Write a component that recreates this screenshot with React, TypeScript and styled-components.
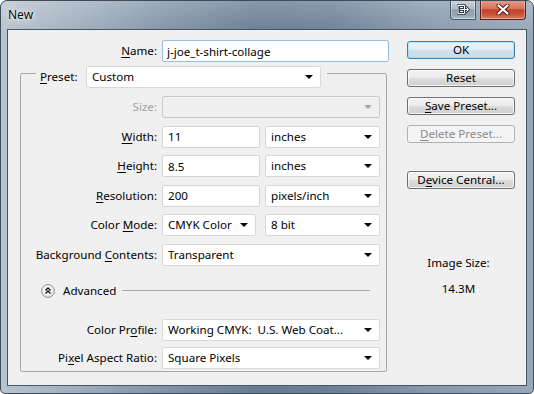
import React from 'react';
import styled, { createGlobalStyle } from 'styled-components';

const FONT = `"Noto Sans", "Open Sans", sans-serif`;
const FS = '11.6px';

const GlobalStyle = createGlobalStyle`
  html, body { margin: 0; padding: 0; background: #ffffff; }
  body { font-family: ${FONT}; font-size: ${FS}; color: #000; }
  * { box-sizing: border-box; }
`;

const Window = styled.div`
  width: 534px;
  height: 394px;
  display: flex;
  flex-direction: column;
  padding: 0 6px 7px 6px;
  border: 1px solid #3e4b5a;
  border-radius: 7px 7px 5px 5px;
  background:
    linear-gradient(180deg, rgba(255,255,255,0.22) 0px, rgba(255,255,255,0.04) 28px, rgba(255,255,255,0) 29px),
    linear-gradient(90deg, #b9c4cf 0%, #a0aebd 14%, #7f91a6 32%, #687c93 48%, #6b7f96 62%, #8798ac 80%, #97a7b8 100%);
  overflow: hidden;
`;

const TitleBar = styled.div`
  height: 28px;
  flex: none;
  display: flex;
  align-items: flex-start;
`;

const Title = styled.div`
  margin: 6px 0 0 1px;
  font-size: 12px;
  line-height: 16px;
  color: #0b0b0b;
  text-shadow: 0 0 6px rgba(255,255,255,0.9), 0 0 3px rgba(255,255,255,0.8);
`;

const CaptionButtons = styled.div`
  margin: -1px 1px 0 auto;
  display: flex;
  gap: 4px;
`;

const CaptionButton = styled.div<{ $variant: 'help' | 'close' }>`
  height: 20px;
  width: ${p => (p.$variant === 'close' ? 46 : 26)}px;
  display: flex;
  align-items: center;
  justify-content: center;
  border: 1px solid ${p => (p.$variant === 'close' ? '#5b1f18' : '#4a5868')};
  border-top: none;
  border-radius: ${p => (p.$variant === 'close' ? '0 0 4px 0' : '0 0 0 4px')};
  background: ${p =>
    p.$variant === 'close'
      ? 'linear-gradient(180deg, #e3a18f 0%, #d6735d 45%, #c24229 52%, #c9553a 78%, #df8464 100%)'
      : 'linear-gradient(180deg, #cfd7e0 0%, #b0bcc9 45%, #8f9daf 52%, #98a6b7 82%, #b4c0cd 100%)'};
  box-shadow: inset 0 0 0 1px rgba(255,255,255,0.35);
`;

const Client = styled.div`
  flex: 1;
  display: flex;
  background: #f0f0f0;
  border: 1px solid #45566a;
`;

const LeftPane = styled.div`
  width: 379px;
  flex: none;
  padding: 10px 0 0 12px;
  display: flex;
  flex-direction: column;
`;

const Row = styled.div<{ $indent?: number }>`
  display: grid;
  grid-template-columns: 136px auto;
  column-gap: 5px;
  align-items: center;
  padding-left: ${p => p.$indent ?? 0}px;
`;

const Label = styled.span<{ $disabled?: boolean }>`
  text-align: right;
  white-space: nowrap;
  line-height: 16px;
  color: ${p => (p.$disabled ? '#a3a3a3' : '#000')};
`;

const Key = styled.span`
  text-decoration: underline;
  text-underline-offset: 2px;
`;

const Controls = styled.div`
  width: 218px;
  display: flex;
  justify-content: space-between;
`;

const TextBox = styled.input<{ $w: number; $focused?: boolean }>`
  width: ${p => p.$w}px;
  height: 22px;
  margin: 0;
  padding: 0 0 0 ${p => (p.$focused ? 4 : 5)}px;
  font: ${FS} ${FONT};
  color: #000;
  background: #fff;
  border: 1px solid ${p => (p.$focused ? '#98bcdc' : '#d4d4d4')};
  border-radius: 2px;
  outline: none;
`;

const Combo = styled.div<{ $w: number; $disabled?: boolean }>`
  position: relative;
  width: ${p => p.$w}px;
  height: 22px;
  padding-left: 5px;
  line-height: 20px;
  white-space: pre;
  background: ${p => (p.$disabled ? '#f0f0f0' : '#fff')};
  border: 1px solid ${p => (p.$disabled ? '#c9c9c9' : '#d8d8d8')};
  border-radius: 2px;
`;

const Arrow = styled.span<{ $disabled?: boolean }>`
  position: absolute;
  right: 7px;
  top: 8px;
  width: 0;
  height: 0;
  border-left: 4px solid transparent;
  border-right: 4px solid transparent;
  border-top: 4px solid ${p => (p.$disabled ? '#a8a8a8' : '#000')};
`;

const GroupBox = styled.div`
  margin-top: 11px;
  width: 367px;
  border: 1px solid #a9a9a9;
  border-radius: 2px;
  padding: 0 6px 2px 0;
  display: flex;
  flex-direction: column;
`;

const GroupHeader = styled.div`
  margin: -8px 0 0 15px;
  align-self: flex-start;
  display: flex;
  align-items: center;
  padding: 0 6px 0 4px;
  background: #f0f0f0;
`;

const HeaderLabel = styled.span`
  width: 46px;
  line-height: 16px;
  white-space: nowrap;
`;

const Rows = styled.div<{ $gap: number; $top: number }>`
  margin-top: ${p => p.$top}px;
  display: flex;
  flex-direction: column;
  gap: ${p => p.$gap}px;
`;

const AdvancedRow = styled.div`
  margin: 17px 10px 0 20px;
  height: 16px;
  display: flex;
  align-items: center;
`;

const AdvancedText = styled.span`
  margin-left: 8px;
  line-height: 16px;
  white-space: nowrap;
`;

const Rule = styled.div`
  flex: 1;
  margin-left: 6px;
  height: 1px;
  background: #a9a9a9;
`;

const RightPane = styled.div`
  flex: 1;
  padding: 11px 0 0 20px;
  display: flex;
  flex-direction: column;
  align-items: flex-start;
`;

const Button = styled.button<{ $kind?: 'default' | 'disabled'; $top?: number }>`
  width: 108px;
  height: 18px;
  margin: ${p => p.$top ?? 10}px 0 0 0;
  padding: 0;
  font: ${FS} ${FONT};
  line-height: 16px;
  color: ${p => (p.$kind === 'disabled' ? '#8a8a8a' : '#000')};
  border: 1px solid ${p => (p.$kind === 'default' ? '#3c7fb1' : p.$kind === 'disabled' ? '#adb2b5' : '#707070')};
  border-radius: 3px;
  background: ${p =>
    p.$kind === 'default'
      ? 'linear-gradient(180deg, #edf4f9 0%, #e0ebf4 50%, #d0e1ee 51%, #c6dbeb 100%)'
      : p.$kind === 'disabled'
      ? '#f4f4f4'
      : 'linear-gradient(180deg, #f2f2f2 0%, #ebebeb 50%, #dddddd 51%, #cfcfcf 100%)'};
  box-shadow: inset 0 0 0 1px ${p => (p.$kind === 'default' ? 'rgba(140,220,250,0.55)' : p.$kind === 'disabled' ? '#f4f4f4' : 'rgba(255,255,255,0.75)')};
`;

const InfoBlock = styled.div`
  width: 108px;
  margin-top: 66px;
  padding-right: 5px;
  text-align: center;
  display: flex;
  flex-direction: column;
  gap: 10px;
  line-height: 16px;
`;

const HelpGlyph = () => (
  <svg width="13" height="11" viewBox="0 0 13 11">
    <g fill="none" strokeLinecap="square">
      <path d="M1.5 1.5h6v8h-6z M3.5 3.5h2 M3.5 5.5h4 M3.5 7.5h2 M6.5 5.5h4.5 M9.5 3.5l2 2-2 2" stroke="#2d3846" strokeWidth="2.4" />
      <path d="M1.5 1.5h6v8h-6z M3.5 3.5h2 M3.5 5.5h4 M3.5 7.5h2 M6.5 5.5h4.5 M9.5 3.5l2 2-2 2" stroke="#ffffff" strokeWidth="1" />
    </g>
  </svg>
);

const CloseGlyph = () => (
  <svg width="14" height="11" viewBox="0 0 14 11">
    <path d="M2.5 1.5l9 8 M11.5 1.5l-9 8" stroke="#4a1a12" strokeWidth="4" strokeLinecap="round" />
    <path d="M2.5 1.5l9 8 M11.5 1.5l-9 8" stroke="#ffffff" strokeWidth="2.2" strokeLinecap="round" />
  </svg>
);

const AdvancedIcon = () => (
  <svg width="14" height="14" viewBox="0 0 14 14">
    <defs>
      <radialGradient id="advg" cx="0.4" cy="0.35" r="0.7">
        <stop offset="0" stopColor="#ffffff" />
        <stop offset="1" stopColor="#e4e4e4" />
      </radialGradient>
    </defs>
    <circle cx="7" cy="7" r="6.4" fill="url(#advg)" stroke="#8e8e8e" strokeWidth="1" />
    <path d="M4.5 6.5L7 4l2.5 2.5 M4.5 9.5L7 7l2.5 2.5" fill="none" stroke="#111" strokeWidth="1.3" />
  </svg>
);

type ComboProps = { w: number; text?: string; disabled?: boolean };
const Select = ({ w, text, disabled }: ComboProps) => (
  <Combo $w={w} $disabled={disabled}>
    {text}
    <Arrow $disabled={disabled} />
  </Combo>
);

export default function App() {
  return (
    <>
      <GlobalStyle />
      <Window>
        <TitleBar>
          <Title>New</Title>
          <CaptionButtons>
            <CaptionButton $variant="help">
              <HelpGlyph />
            </CaptionButton>
            <CaptionButton $variant="close">
              <CloseGlyph />
            </CaptionButton>
          </CaptionButtons>
        </TitleBar>
        <Client>
          <LeftPane>
            <Row $indent={1}>
              <Label>
                <Key>N</Key>ame:
              </Label>
              <TextBox $w={227} $focused readOnly defaultValue="j-joe_t-shirt-collage" />
            </Row>
            <GroupBox>
              <GroupHeader>
                <HeaderLabel>
                  <Key>P</Key>reset:
                </HeaderLabel>
                <Select w={235} text="Custom" />
              </GroupHeader>
              <Rows $gap={7.5} $top={8}>
                <Row>
                  <Label $disabled>Size:</Label>
                  <Select w={218} disabled />
                </Row>
                <Row>
                  <Label>
                    <Key>W</Key>idth:
                  </Label>
                  <Controls>
                    <TextBox $w={98} readOnly defaultValue="11" />
                    <Select w={115} text="inches" />
                  </Controls>
                </Row>
                <Row>
                  <Label>
                    <Key>H</Key>eight:
                  </Label>
                  <Controls>
                    <TextBox $w={98} readOnly defaultValue="8.5" />
                    <Select w={115} text="inches" />
                  </Controls>
                </Row>
                <Row>
                  <Label>
                    <Key>R</Key>esolution:
                  </Label>
                  <Controls>
                    <TextBox $w={98} readOnly defaultValue="200" />
                    <Select w={115} text="pixels/inch" />
                  </Controls>
                </Row>
                <Row>
                  <Label>
                    Color <Key>M</Key>ode:
                  </Label>
                  <Controls>
                    <Select w={94} text="CMYK Color" />
                    <Select w={115} text="8 bit" />
                  </Controls>
                </Row>
                <Row>
                  <Label>
                    Background <Key>C</Key>ontents:
                  </Label>
                  <Select w={218} text="Transparent" />
                </Row>
              </Rows>
              <AdvancedRow>
                <AdvancedIcon />
                <AdvancedText>Advanced</AdvancedText>
                <Rule />
              </AdvancedRow>
              <Rows $gap={6} $top={20}>
                <Row>
                  <Label>
                    Color Pr<Key>o</Key>file:
                  </Label>
                  <Select w={218} text="Working CMYK:  U.S. Web Coat..." />
                </Row>
                <Row>
                  <Label>
                    Pi<Key>x</Key>el Aspect Ratio:
                  </Label>
                  <Select w={218} text="Square Pixels" />
                </Row>
              </Rows>
            </GroupBox>
          </LeftPane>
          <RightPane>
            <Button $kind="default" $top={0}>OK</Button>
            <Button>Reset</Button>
            <Button>
              <Key>S</Key>ave Preset...
            </Button>
            <Button $kind="disabled">
              <Key>D</Key>elete Preset...
            </Button>
            <Button $top={28}>
              D<Key>e</Key>vice Central...
            </Button>
            <InfoBlock>
              <span>Image Size:</span>
              <span>14.3M</span>
            </InfoBlock>
          </RightPane>
        </Client>
      </Window>
    </>
  );
}
